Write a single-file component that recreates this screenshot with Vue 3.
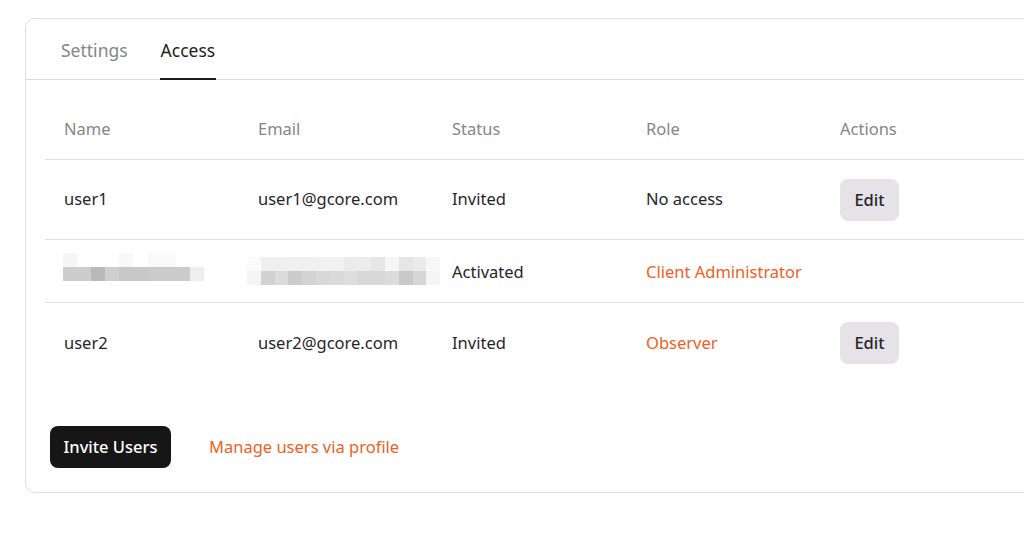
<script setup>
const users = [
  { name: 'user1', email: 'user1@gcore.com', status: 'Invited', role: 'No access', canEdit: true },
  { hidden: true, status: 'Activated', role: 'Client Administrator', roleLink: true },
  { name: 'user2', email: 'user2@gcore.com', status: 'Invited', role: 'Observer', roleLink: true, canEdit: true }
];

// blurred-out name and email, one grey value per block
const nameBlur = [
  ['#f5f5f5', '#fff', '#fff', '#fff', '#f8f8f8', '#fff', '#fafafa', '#fafafa', '#fff', '#fff'],
  ['#cdcdcd', '#cdcdcd', '#b9b9b9', '#cfcfcf', '#c8c8c8', '#c8c8c8', '#cbcbcb', '#cbcbcb', '#cbcbcb', '#eeeeee']
];
const emailBlur = [
  ['#fafafa', '#efefef', '#efefef', '#f0f0f0', '#f0f0f0', '#f1f1f1', '#f1f1f1', '#ebebeb', '#ededed', '#e6e6e6', '#f6f6f6', '#e6e6e6', '#ebebeb', '#f8f8f8'],
  ['#f5f5f5', '#d2d2d2', '#dbdbdb', '#cbcbcb', '#d3d3d3', '#d8d8d8', '#dadada', '#dedede', '#d8d8d8', '#d8d8d8', '#dcdcdc', '#c9c9c9', '#d6d6d6', '#f5f5f5']
];
</script>

<template>
  <div class="page">
    <section class="card">
      <nav class="tabs">
        <a class="tab">Settings</a>
        <a class="tab active">Access</a>
      </nav>

      <div class="body">
        <table class="users">
          <thead>
            <tr>
              <th>Name</th>
              <th>Email</th>
              <th>Status</th>
              <th>Role</th>
              <th>Actions</th>
            </tr>
          </thead>
          <tbody>
            <tr v-for="(user, i) in users" :key="i" :class="{ compact: user.hidden }">
              <td>
                <div v-if="user.hidden" class="blur blur-name">
                  <div v-for="(line, l) in nameBlur" :key="l" class="blur-line">
                    <i v-for="(grey, c) in line" :key="c" :style="{ background: grey }"></i>
                  </div>
                </div>
                <template v-else>{{ user.name }}</template>
              </td>
              <td>
                <div v-if="user.hidden" class="blur blur-email">
                  <div v-for="(line, l) in emailBlur" :key="l" class="blur-line">
                    <i v-for="(grey, c) in line" :key="c" :style="{ background: grey }"></i>
                  </div>
                </div>
                <template v-else>{{ user.email }}</template>
              </td>
              <td>{{ user.status }}</td>
              <td :class="{ link: user.roleLink }">{{ user.role }}</td>
              <td>
                <button v-if="user.canEdit" class="edit-btn">Edit</button>
              </td>
            </tr>
          </tbody>
        </table>

        <div class="footer">
          <button class="invite-btn">Invite Users</button>
          <a class="link manage">Manage users via profile</a>
        </div>
      </div>
    </section>
  </div>
</template>

<style>
html,
body {
  overflow: hidden;
  background: #fff;
}
</style>

<style scoped>
.page {
  width: 1024px;
  height: 535px;
  overflow: hidden;
  padding: 18px 0 0 25px;
  box-sizing: border-box;
  font-family: "Noto Sans", sans-serif;
  font-size: 16.5px;
  color: #26262a;
}

.card {
  width: 1060px;
  box-sizing: border-box;
  border: 1px solid #dedee0;
  border-radius: 10px;
}

.tabs {
  display: flex;
  gap: 31px;
  height: 61px;
  box-sizing: border-box;
  padding-left: 34px;
  border-bottom: 1px solid #d9d9dc;
  font-size: 17.5px;
}

.tab {
  height: 60px;
  box-sizing: border-box;
  padding: 19px 1px 0;
  line-height: 24px;
  color: #85858b;
}

.tab.active {
  color: #1d1d20;
  border-bottom: 2px solid #1d1d20;
  height: 61px;
}

.body {
  padding: 0 0 24px 19px;
}

.users {
  width: 1015px;
  table-layout: fixed;
  border-collapse: collapse;
}

th {
  width: 194px;
  height: 79px;
  box-sizing: border-box;
  padding: 20px 0 0 19px;
  text-align: left;
  font-weight: 400;
  line-height: 24px;
  color: #85858b;
  border-bottom: 1px solid #dfdee5;
}

th:last-child {
  width: auto;
}

td {
  height: 80px;
  box-sizing: border-box;
  padding: 0 0 0 19px;
  line-height: 24px;
  border-bottom: 1px solid #dfdee5;
}

.compact td {
  height: 63px;
  padding-top: 3px;
}

tbody tr:first-child .edit-btn {
  margin-top: 2px;
}

tbody tr:last-child td {
  border-bottom: none;
  padding-top: 2px;
}

.link {
  color: #f0601f;
}

.edit-btn {
  display: block;
  width: 59px;
  height: 42px;
  padding: 0 0 2px;
  border: none;
  border-radius: 8px;
  background: #e5e2e8;
  color: #26262a;
  font: 500 16.5px "Noto Sans", sans-serif;
}

.blur {
  display: flex;
  flex-direction: column;
}

.blur-name {
  margin: -10px 0 0 -1px;
}

.blur-email {
  margin: -2px 0 0 -11px;
}

.blur-line {
  display: flex;
  height: 14px;
}

.blur-line i {
  flex: none;
  height: 14px;
  width: 14.1px;
}

.blur-email .blur-line i {
  width: 13.8px;
}

.footer {
  display: flex;
  align-items: center;
  gap: 38px;
  margin-top: 44px;
  padding-left: 5px;
}

.invite-btn {
  width: 121px;
  height: 42px;
  padding: 0 0 2px;
  border: none;
  border-radius: 8px;
  background: #161616;
  color: #fff;
  font: 500 16.5px "Noto Sans", sans-serif;
}

.manage {
  line-height: 24px;
}
</style>
